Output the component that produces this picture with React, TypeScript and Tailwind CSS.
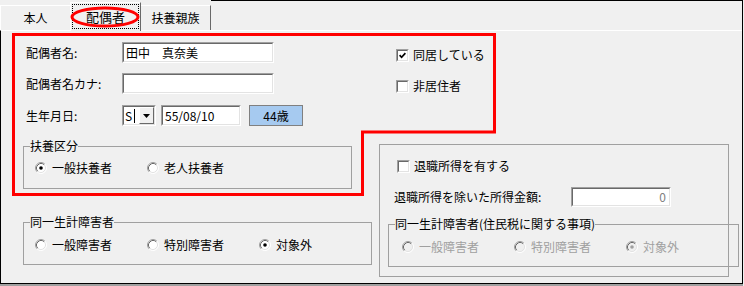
import React from 'react';

function Radio({ checked, disabled }: { checked?: boolean; disabled?: boolean }) {
  return (
    <svg width="12" height="12" viewBox="0 0 12 12" className="shrink-0">
      <circle cx="6" cy="6" r="5" fill={disabled ? '#f0f0f0' : '#ffffff'} />
      <path d="M9.89 2.11A5.5 5.5 0 0 0 2.11 9.89" fill="none" stroke="#a0a0a0" />
      <path d="M2.11 9.89A5.5 5.5 0 0 0 9.89 2.11" fill="none" stroke="#ffffff" />
      <path d="M9.18 2.82A4.5 4.5 0 0 0 2.82 9.18" fill="none" stroke="#696969" />
      <path d="M2.82 9.18A4.5 4.5 0 0 0 9.18 2.82" fill="none" stroke="#e3e3e3" />
      {checked && <circle cx="6" cy="6" r="1.8" fill={disabled ? '#a0a0a0' : '#000000'} />}
    </svg>
  );
}

function Check({ checked }: { checked?: boolean }) {
  return (
    <span className="flex h-[13px] w-[13px] shrink-0 border border-t-[#a0a0a0] border-l-[#a0a0a0] border-r-white border-b-white">
      <span className="flex flex-1 items-center justify-center border border-t-[#696969] border-l-[#696969] border-r-[#e3e3e3] border-b-[#e3e3e3] bg-white">
        {checked && (
          <svg width="7" height="7" viewBox="0 0 7 7">
            <path d="M0.6 3.2 L2.6 5.3 L6.4 1.2" stroke="#000" strokeWidth="1.7" fill="none" />
          </svg>
        )}
      </span>
    </span>
  );
}

function Sunken({ className, children }: { className: string; children?: React.ReactNode }) {
  return (
    <div className={`flex shrink-0 border border-t-[#a0a0a0] border-l-[#a0a0a0] border-r-white border-b-white ${className}`}>
      <div className="flex flex-1 items-center overflow-hidden border border-t-[#696969] border-l-[#696969] border-r-[#e3e3e3] border-b-[#e3e3e3] bg-white">
        {children}
      </div>
    </div>
  );
}

function RadioItem({ label, checked, disabled }: { label: string; checked?: boolean; disabled?: boolean }) {
  return (
    <div className={`flex w-[112px] items-center gap-[5px] ${disabled ? 'text-[#a0a0a0]' : ''}`}>
      <Radio checked={checked} disabled={disabled} />
      <span>{label}</span>
    </div>
  );
}

function Group({ title, className, children }: { title: string; className: string; children: React.ReactNode }) {
  return (
    <fieldset className={`shrink-0 border border-[#a0a0a0] ${className}`}>
      <legend className="ml-[6px] p-0 leading-[14px]">{title}</legend>
      {children}
    </fieldset>
  );
}

export default function App() {
  return (
    <div className="relative h-[286px] w-[744px] bg-[#f0f0f0] font-['Noto_Sans_CJK_JP',sans-serif] text-[12px] leading-[14px] text-black">
      <div className="flex h-[284px] w-[743px] flex-col border-r border-black">
        {/* tabs */}
        <div className="flex h-[30px] items-end">
          <div className="flex h-[25px] w-[70px] items-center justify-center border-t border-l border-t-white border-l-white">
            本人
          </div>
          <div className="relative z-10 -mb-px flex h-[29px] w-[71px] border-t border-l border-r border-t-white border-l-white border-r-[#696969] bg-[#f0f0f0] px-px pt-px pb-[2px]">
            <span className="flex flex-1 items-center justify-center border border-dotted border-black text-[13px]">配偶者</span>
          </div>
          <div className="flex h-[25px] w-[70px] items-center justify-center border-t border-r border-t-white border-r-[#696969]">
            扶養親族
          </div>
          <div className="h-full flex-1 border-t border-black" />
        </div>

        {/* panel */}
        <div className="flex flex-1 border-t border-l border-b border-t-white border-l-black border-b-black">
          {/* left column */}
          <div className="flex w-[378px] flex-col">
            <div className="mt-[11px] flex h-[21px] items-center">
              <span className="w-[121px] pl-[25px]">配偶者名:</span>
              <Sunken className="h-[21px] w-[152px]">
                <span className="pl-[2px]">田中　真奈美</span>
              </Sunken>
            </div>
            <div className="mt-[10px] flex h-[21px] items-center">
              <span className="w-[121px] pl-[25px]">配偶者名カナ:</span>
              <Sunken className="h-[21px] w-[152px]" />
            </div>
            <div className="mt-[11px] flex h-[21px] items-center">
              <span className="w-[121px] pl-[25px]">生年月日:</span>
              <Sunken className="h-[21px] w-[34px]">
                <span className="pl-[1px]">S</span>
                <span className="ml-[2px] h-[14px] w-px bg-black" />
                <span className="ml-auto flex h-full w-[15px] items-center justify-center border border-t-white border-l-white border-r-[#696969] border-b-[#696969] bg-[#f0f0f0]">
                  <svg width="7" height="4" viewBox="0 0 7 4">
                    <path d="M0 0 H7 L3.5 4 Z" fill="#000" />
                  </svg>
                </span>
              </Sunken>
              <Sunken className="ml-[5px] h-[21px] w-[80px]">
                <span className="pl-[2px]">55/08/10</span>
              </Sunken>
              <div className="ml-[8px] flex h-[21px] w-[54px] items-center justify-center border border-[#808080] bg-[#a6caf0]">
                44歳
              </div>
            </div>

            <Group title="扶養区分" className="mt-[13px] ml-[22px] h-[50px] w-[329px]">
              <div className="mt-[8px] flex h-[14px] pl-[11px]">
                <RadioItem label="一般扶養者" checked />
                <RadioItem label="老人扶養者" />
              </div>
            </Group>

            <Group title="同一生計障害者" className="mt-[26px] ml-[22px] h-[50px] w-[329px]">
              <div className="mt-[9px] flex h-[14px] pl-[11px]">
                <RadioItem label="一般障害者" />
                <RadioItem label="特別障害者" />
                <RadioItem label="対象外" checked />
              </div>
            </Group>
          </div>

          {/* right column */}
          <div className="flex w-[350px] flex-col">
            <div className="mt-[17px] flex h-[14px] items-center gap-[4px] pl-[17px]">
              <Check checked />
              <span>同居している</span>
            </div>
            <div className="mt-[17px] flex h-[14px] items-center gap-[4px] pl-[17px]">
              <Check />
              <span>非居住者</span>
            </div>

            <div className="mt-[51px] flex h-[133px] w-[350px] flex-col border border-[#a0a0a0]">
              <div className="mt-[14px] flex h-[14px] items-center gap-[4px] pl-[17px]">
                <Check />
                <span>退職所得を有する</span>
              </div>
              <div className="mt-[14px] flex h-[20px] items-center pl-[14px]">
                <span className="w-[177px]">退職所得を除いた所得金額:</span>
                <Sunken className="h-[20px] w-[100px]">
                  <span className="ml-auto pr-[3px] text-[#808080]">0</span>
                </Sunken>
              </div>
              <Group title="同一生計障害者(住民税に関する事項)" className="mt-[10px] ml-[8px] h-[50px] w-[330px]">
                <div className="mt-[9px] flex h-[14px] pl-[13px]">
                  <RadioItem label="一般障害者" disabled />
                  <RadioItem label="特別障害者" disabled />
                  <RadioItem label="対象外" checked disabled />
                </div>
              </Group>
            </div>
          </div>
        </div>
      </div>
      <div className="h-[2px] w-[743px] bg-[#a0a0a0]" />

      {/* red annotation overlay */}
      <svg className="pointer-events-none absolute inset-0 z-20" width="744" height="286">
        <ellipse cx="105" cy="17" rx="33" ry="9" fill="none" stroke="#ff0000" strokeWidth="3" />
        <polygon
          points="13.5,34.5 494.5,34.5 494.5,132 362.5,132 362.5,194.5 13.5,194.5"
          fill="none"
          stroke="#ff0000"
          strokeWidth="3"
        />
      </svg>
    </div>
  );
}
